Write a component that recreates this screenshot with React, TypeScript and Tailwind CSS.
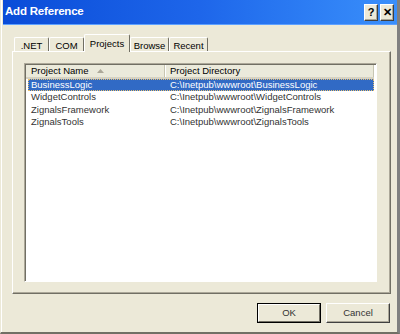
const rows = [
  { name: "BusinessLogic", dir: "C:\\Inetpub\\wwwroot\\BusinessLogic" },
  { name: "WidgetControls", dir: "C:\\Inetpub\\wwwroot\\WidgetControls" },
  { name: "ZignalsFramework", dir: "C:\\Inetpub\\wwwroot\\ZignalsFramework" },
  { name: "ZignalsTools", dir: "C:\\Inetpub\\wwwroot\\ZignalsTools" },
];

const tabs = [
  { label: ".NET", w: "w-[35px]" },
  { label: "COM", w: "w-[35px]" },
  { label: "Projects", w: "w-[46px]", active: true },
  { label: "Browse", w: "w-[39px]" },
  { label: "Recent", w: "w-[39px]" },
];

const TitleButton = ({ children }: { children: React.ReactNode }) => (
  <div className="w-[14px] h-[17px] bg-[#ECE9D8] border-t border-l border-white border-r border-b border-r-[#404040] border-b-[#404040] shadow-[inset_-1px_-1px_0_#ACA899] flex items-center justify-center text-[11px] font-bold leading-none text-black">
    {children}
  </div>
);

const Tab = ({ label, w, active }: { label: string; w: string; active?: boolean }) =>
  active ? (
    <div
      className={`${w} h-[18px] -mb-px z-10 bg-[#ECE9D8] border-t border-l border-white border-r border-r-[#716F64] rounded-t-[2px] flex items-start justify-center pt-[2px]`}
    >
      {label}
    </div>
  ) : (
    <div
      className={`${w} h-[14px] bg-[#ECE9D8] border-t border-l border-white border-r border-r-[#716F64] rounded-t-[2px] flex items-start justify-center pt-[1px]`}
    >
      {label}
    </div>
  );

export default function App() {
  return (
    <div className="w-[400px] h-[334px] bg-[#ECE9D8] flex flex-col border-l border-l-[#ECE9D8] border-r-[3px] border-r-[#808080] border-b-2 border-b-[#716F64] font-['Liberation_Sans',Arial,sans-serif] text-[9.5px] text-black overflow-hidden">
      <div className="flex border-l border-white h-full flex-col pl-[1px]">
        {/* title bar */}
        <div className="h-[25px] flex items-center pl-[2px] pr-[3px] bg-gradient-to-r from-[#0A4CD8] via-[#1E66EA] to-[#3A8FFB] border-b border-[#5DA0FF]">
          <span className="text-white font-bold text-[11.5px] tracking-[-0.2px]">Add Reference</span>
          <div className="ml-auto flex gap-[2px]">
            <TitleButton>?</TitleButton>
            <TitleButton>✕</TitleButton>
          </div>
        </div>

        {/* tab strip */}
        <div className="flex items-end pl-[11px] mt-[9px] h-[17px]">
          {tabs.map((t) => (
            <Tab key={t.label} {...t} />
          ))}
        </div>

        {/* tab panel */}
        <div className="ml-[9px] w-[379px] h-[243px] bg-[#ECE9D8] border-t border-l border-white border-r border-b border-r-[#716F64] border-b-[#716F64] shadow-[inset_-1px_-1px_0_#ACA899] pt-[11px] pl-[11px] pr-[13px] pb-[11px] flex">
          <div className="flex-1 bg-white border border-t-[#ACA899] border-l-[#ACA899] border-r-white border-b-white shadow-[inset_1px_1px_0_#716F64] pl-[1px] pt-[1px] flex flex-col">
            {/* header */}
            <div className="flex h-[14px] mr-[2px] bg-[#EBEADB] border-b-2 border-b-[#D6D2C2]">
              <div className="w-[139px] h-full flex items-center pl-[5px] border-r border-r-[#C7C5B2] shadow-[1px_0_0_white]">
                <span>Project Name</span>
                <svg width="7" height="4" viewBox="0 0 7 4" className="ml-[8px]">
                  <polygon points="3.5,0 7,4 0,4" fill="#ACA899" />
                </svg>
              </div>
              <div className="flex-1 h-full flex items-center pl-[5px] border-r border-r-[#C7C5B2]">
                Project Directory
              </div>
            </div>
            {/* rows */}
            <div className="flex flex-col">
              {rows.map((r, i) => (
                <div
                  key={r.name}
                  className={`flex h-[12.3px] items-center mx-[2px] ${
                    i === 0
                      ? "bg-[#316AC5] text-white outline outline-1 outline-dotted outline-[#E8C070] -outline-offset-1"
                      : "text-[#333]"
                  }`}
                >
                  <div className="w-[137px] pl-[3px] truncate">{r.name}</div>
                  <div className="flex-1 pl-[5px] truncate">{r.dir}</div>
                </div>
              ))}
            </div>
          </div>
        </div>

        {/* buttons */}
        <div className="flex justify-end gap-[5px] mt-[9px] pr-[7px]">
          <div className="w-[64px] h-[20px] border border-black flex">
            <div className="flex-1 bg-[#ECE9D8] border-t border-l border-white border-r border-b border-r-[#716F64] border-b-[#716F64] flex items-center justify-center text-[#333]">
              OK
            </div>
          </div>
          <div className="w-[64px] h-[20px] bg-[#ECE9D8] border-t border-l border-white border-r border-b border-r-[#404040] border-b-[#404040] shadow-[inset_-1px_-1px_0_#ACA899] flex items-center justify-center text-[#333]">
            Cancel
          </div>
        </div>
      </div>
    </div>
  );
}
